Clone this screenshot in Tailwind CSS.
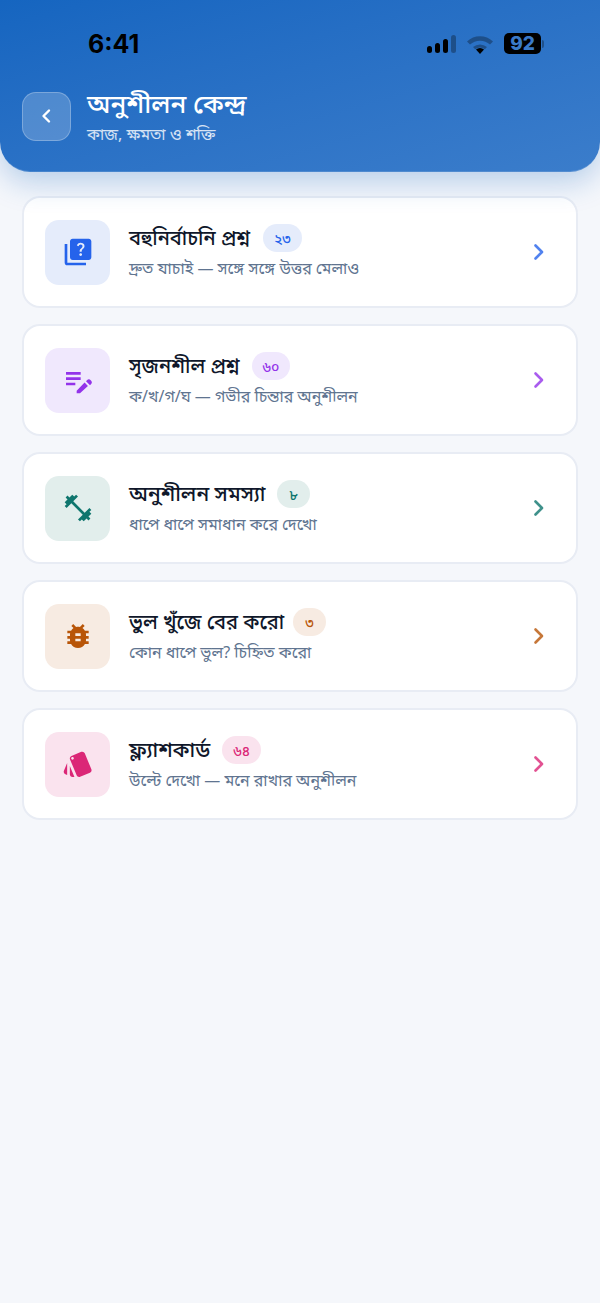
<!DOCTYPE html>
<html lang="bn"><head><meta charset="utf-8"><script src="https://cdn.jsdelivr.net/npm/@tailwindcss/browser@4"></script></head>
<body class="m-0 bg-[#f5f7fb] font-['Noto_Sans','Noto_Sans_Bengali','Inter',sans-serif]">
<div class="w-[600px] h-[1303px] overflow-hidden bg-[#f5f7fb]">
<header class="relative h-[172px] rounded-b-[30px] bg-gradient-to-br from-[#1565c0] to-[#3b7dcb] shadow-[0_10px_30px_rgba(21,101,192,0.28)] border-b border-white/20">
  <div class="flex items-center justify-between h-[88px] pl-[88px] pr-[56px]">
    <span class="font-['Inter',sans-serif] font-bold text-[25px] leading-none text-black">6:41</span>
    <div class="flex items-center gap-[10px] -mt-[1px]">
      <div class="flex items-end gap-[3px] h-[18px] -ml-[2px]">
        <i class="block w-[5px] h-[7px] rounded-full bg-black"></i><i class="block w-[5px] h-[10px] rounded-full bg-black"></i><i class="block w-[5px] h-[14px] rounded-full bg-black"></i><i class="block w-[5px] h-[18px] rounded-full bg-black/30"></i>
      </div>
      <svg width="28" height="20" viewBox="0 0 28 20"><path d="M1 7.5a19 19 0 0 1 26 0l-3 3a15 15 0 0 0-20 0z" fill="#000" fill-opacity=".3"/><path d="M7 13a11 11 0 0 1 14 0l-2.2 2.3a8 8 0 0 0-9.6 0z" fill="#000" fill-opacity=".3"/><path d="M10 15.5a6 6 0 0 1 8 0L14 20z" fill="#000"/></svg>
      <div class="flex items-center">
        <span class="flex items-center justify-center w-[37px] h-[21px] rounded-[5px] bg-black font-['Inter',sans-serif] font-extrabold text-[19px] leading-none text-[#3a7ac8]">92</span>
        <i class="block w-[2px] h-[8px] rounded-r bg-black/30 ml-[1px]"></i>
      </div>
    </div>
  </div>
  <div class="flex items-center gap-[16px] pl-[22px] -mt-[2px]">
    <button class="flex items-center justify-center w-[49px] h-[49px] mt-[1px] rounded-[14px] bg-white/20 border border-white/25">
      <svg width="24" height="24" viewBox="0 0 24 24" fill="none" stroke="#fff" stroke-width="2.4" stroke-linecap="round" stroke-linejoin="round"><path d="M14 6.5 8.5 12l5.5 5.5"/></svg>
    </button>
    <div>
      <h1 class="text-[26px] leading-[34px] mb-[3px] font-medium text-white whitespace-nowrap">অনুশীলন কেন্দ্র</h1>
      <p class="text-[16px] leading-[22px] text-white/80">কাজ, ক্ষমতা ও শক্তি</p>
    </div>
  </div>
</header>
<main class="flex flex-col gap-[16px] px-[22px] pt-[24px]">
  <section class="flex items-center h-[112px] rounded-[18px] bg-white border-2 border-[#e8ecf4] pl-[21px] pr-[30px]">
    <div class="flex items-center justify-center w-[65px] h-[65px] rounded-[14px] bg-[#e5ecfb]">
      <svg width="32" height="32" viewBox="0 0 24 24" fill="#2563eb"><path d="M4 6H2v14c0 1.1.9 2 2 2h14v-2H4V6zm16-4H8c-1.1 0-2 .9-2 2v12c0 1.1.9 2 2 2h12c1.1 0 2-.9 2-2V4c0-1.1-.9-2-2-2zm-5.99 13c-.59 0-1.05-.47-1.05-1.05 0-.59.47-1.04 1.05-1.04.59 0 1.04.45 1.04 1.04-.01.58-.45 1.05-1.04 1.05zm2.5-6.17c-.63.93-1.23 1.21-1.56 1.81-.13.24-.18.4-.18 1.18h-1.52c0-.41-.06-1.08.26-1.65.41-.73 1.18-1.16 1.63-1.8.48-.68.21-1.94-1.14-1.94-.88 0-1.32.67-1.5 1.23l-1.37-.57C11.51 5.96 12.52 5 13.99 5c1.23 0 2.08.56 2.51 1.26.37.61.58 1.73.01 2.57z"/></svg>
    </div>
    <div class="flex-1 ml-[19px] pb-[1px]">
      <div class="flex items-center gap-[13px] h-[30px] mb-[3px]"><h2 class="text-[20px] font-medium text-[#0f172a] whitespace-nowrap">বহুনির্বাচনি প্রশ্ন</h2><span class="flex items-center h-[28px] px-[11px] rounded-full bg-[#e5ecfb] text-[14px] font-medium text-[#2563eb]">২৩</span></div>
      <p class="text-[16px] leading-[24px] text-[#607490]">দ্রুত যাচাই — সঙ্গে সঙ্গে উত্তর মেলাও</p>
    </div>
    <svg width="14" height="20" viewBox="0 0 14 20" fill="none" stroke="#2563eb" stroke-opacity=".8" stroke-width="2.6" stroke-linecap="round" stroke-linejoin="round"><path d="M3.5 3.5 10 10l-6.5 6.5"/></svg>
  </section>
  <section class="flex items-center h-[112px] rounded-[18px] bg-white border-2 border-[#e8ecf4] pl-[21px] pr-[30px]">
    <div class="flex items-center justify-center w-[65px] h-[65px] rounded-[14px] bg-[#f0e8fd]">
      <svg width="32" height="32" viewBox="0 0 24 24" fill="#9333ea"><path d="M3 10h11v2H3v-2zm0-2h11V6H3v2zm0 8h7v-2H3v2zm15.01-3.13.71-.71a2 2 0 0 1 2.83 0l.16.16a2 2 0 0 1 0 2.83l-.71.71-2.99-2.99zm-1.06 1.06L11 20v2h2.5l5.95-5.57-2.5-2.5z"/></svg>
    </div>
    <div class="flex-1 ml-[19px] pb-[1px]">
      <div class="flex items-center gap-[12px] h-[30px] mb-[3px]"><h2 class="text-[20px] font-medium text-[#0f172a] whitespace-nowrap">সৃজনশীল প্রশ্ন</h2><span class="flex items-center h-[28px] px-[11px] rounded-full bg-[#f0e8fd] text-[14px] font-medium text-[#9333ea]">৬০</span></div>
      <p class="text-[16px] leading-[24px] text-[#607490]">ক/খ/গ/ঘ — গভীর চিন্তার অনুশীলন</p>
    </div>
    <svg width="14" height="20" viewBox="0 0 14 20" fill="none" stroke="#9333ea" stroke-opacity=".8" stroke-width="2.6" stroke-linecap="round" stroke-linejoin="round"><path d="M3.5 3.5 10 10l-6.5 6.5"/></svg>
  </section>
  <section class="flex items-center h-[112px] rounded-[18px] bg-white border-2 border-[#e8ecf4] pl-[21px] pr-[30px]">
    <div class="flex items-center justify-center w-[65px] h-[65px] rounded-[14px] bg-[#e2eeec]">
      <svg width="32" height="32" viewBox="0 0 24 24" fill="#0f766e"><path d="M20.57 14.86 22 13.43 20.57 12 17 15.57 8.43 7 12 3.43 10.57 2 9.14 3.43 7.71 2 5.57 4.14 4.14 2.71 2.71 4.14l1.43 1.43L2 7.71l1.43 1.43L2 10.57 3.43 12 7 8.43 15.57 17 12 20.57 13.43 22l1.43-1.43L16.29 22l2.14-2.14 1.43 1.43 1.43-1.43-1.43-1.43L22 16.29z"/></svg>
    </div>
    <div class="flex-1 ml-[19px] pb-[1px]">
      <div class="flex items-center gap-[12px] h-[30px] mb-[3px]"><h2 class="text-[21px] font-medium text-[#0f172a] whitespace-nowrap">অনুশীলন সমস্যা</h2><span class="flex items-center h-[28px] px-[12px] rounded-full bg-[#e2eeec] text-[14px] font-medium text-[#0f766e]">৮</span></div>
      <p class="text-[16px] leading-[24px] text-[#607490]">ধাপে ধাপে সমাধান করে দেখো</p>
    </div>
    <svg width="14" height="20" viewBox="0 0 14 20" fill="none" stroke="#0f766e" stroke-opacity=".8" stroke-width="2.6" stroke-linecap="round" stroke-linejoin="round"><path d="M3.5 3.5 10 10l-6.5 6.5"/></svg>
  </section>
  <section class="flex items-center h-[112px] rounded-[18px] bg-white border-2 border-[#e8ecf4] pl-[21px] pr-[30px]">
    <div class="flex items-center justify-center w-[65px] h-[65px] rounded-[14px] bg-[#f7ebe2]">
      <svg width="32" height="32" viewBox="0 0 24 24" fill="#b85508"><path d="M20 8h-2.81c-.45-.78-1.07-1.45-1.82-1.96L17 4.41 15.59 3l-2.17 2.17C12.96 5.06 12.49 5 12 5c-.49 0-.96.06-1.41.17L8.41 3 7 4.41l1.62 1.63C7.88 6.55 7.26 7.22 6.81 8H4v2h2.09c-.05.33-.09.66-.09 1v1H4v2h2v1c0 .34.04.67.09 1H4v2h2.81c1.04 1.79 2.97 3 5.19 3s4.15-1.21 5.19-3H20v-2h-2.09c.05-.33.09-.66.09-1v-1h2v-2h-2v-1c0-.34-.04-.67-.09-1H20V8zm-6 8h-4v-2h4v2zm0-4h-4v-2h4v2z"/></svg>
    </div>
    <div class="flex-1 ml-[19px] pb-[1px]">
      <div class="flex items-center gap-[9px] h-[30px] mb-[3px]"><h2 class="text-[20px] font-medium text-[#0f172a] whitespace-nowrap">ভুল খুঁজে বের করো</h2><span class="flex items-center h-[28px] px-[12px] rounded-full bg-[#f7ebe2] text-[14px] font-medium text-[#b85508]">৩</span></div>
      <p class="text-[16px] leading-[24px] text-[#607490]">কোন ধাপে ভুল? চিহ্নিত করো</p>
    </div>
    <svg width="14" height="20" viewBox="0 0 14 20" fill="none" stroke="#b85508" stroke-opacity=".8" stroke-width="2.6" stroke-linecap="round" stroke-linejoin="round"><path d="M3.5 3.5 10 10l-6.5 6.5"/></svg>
  </section>
  <section class="flex items-center h-[112px] rounded-[18px] bg-white border-2 border-[#e8ecf4] pl-[21px] pr-[30px]">
    <div class="flex items-center justify-center w-[65px] h-[65px] rounded-[14px] bg-[#fae3ee]">
      <svg width="32" height="32" viewBox="0 0 24 24" fill="#db2777"><path d="M2.53 19.65l1.34.56v-9.03l-2.43 5.86c-.41 1.02.08 2.19 1.09 2.61zm19.5-3.7L17.07 3.98c-.31-.75-1.04-1.21-1.81-1.23-.26 0-.53.04-.79.15L7.1 5.95c-.75.31-1.21 1.03-1.23 1.8-.01.27.04.54.15.8l4.96 11.97c.31.76 1.05 1.22 1.83 1.23.26 0 .52-.05.77-.15l7.36-3.05c1.02-.42 1.51-1.59 1.09-2.6zM7.88 8.75c-.55 0-1-.45-1-1s.45-1 1-1 1 .45 1 1-.45 1-1 1zm-2 11c0 1.1.9 2 2 2h1.45l-3.45-8.34v6.34z"/></svg>
    </div>
    <div class="flex-1 ml-[19px] pb-[1px]">
      <div class="flex items-center gap-[12px] h-[30px] mb-[3px]"><h2 class="text-[21px] font-medium text-[#0f172a] whitespace-nowrap">ফ্ল্যাশকার্ড</h2><span class="flex items-center h-[28px] px-[11px] rounded-full bg-[#fae3ee] text-[14px] font-medium text-[#db2777]">৬৪</span></div>
      <p class="text-[16px] leading-[24px] text-[#607490]">উল্টে দেখো — মনে রাখার অনুশীলন</p>
    </div>
    <svg width="14" height="20" viewBox="0 0 14 20" fill="none" stroke="#db2777" stroke-opacity=".8" stroke-width="2.6" stroke-linecap="round" stroke-linejoin="round"><path d="M3.5 3.5 10 10l-6.5 6.5"/></svg>
  </section>
</main>
</div>
</body></html>
